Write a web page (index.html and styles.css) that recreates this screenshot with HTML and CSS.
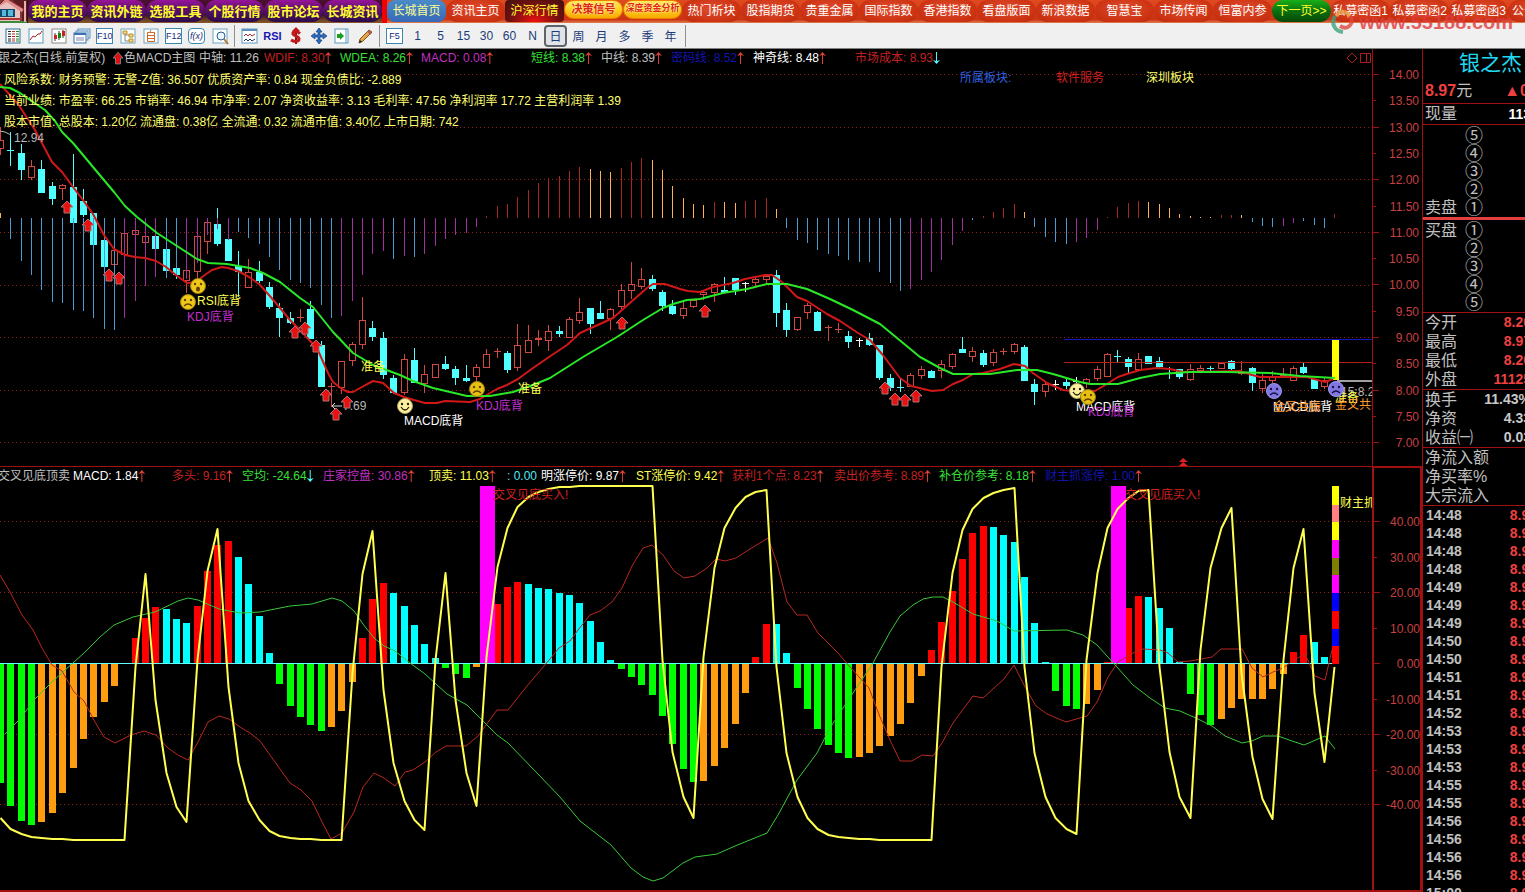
FILE: index.html
```html
<!DOCTYPE html>
<html lang="zh-CN">
<head>
<meta charset="utf-8">
<title>银之杰 日线</title>
<link rel="stylesheet" href="styles.css">
</head>
<body>
<nav class="nav">
  <a class="home" href="#" aria-label="主页">
    <svg width="27" height="23" viewBox="0 0 27 23">
      <rect width="27" height="23" fill="#7d3a36"/>
      <path d="M0 0H27V23H22V8L12 0Z" fill="#5d1c22"/>
      <path d="M-6 10L6-2L24 9L22 13L7 3L-4 13Z" fill="#e08a8a" stroke="#7a1d24"/>
      <path d="M0 6L7 2L20 11V21H0Z" fill="#e9c3bf"/>
      <rect x="0" y="9" width="15" height="8" fill="#16486b"/>
      <path d="M2 10H6V16H2ZM8 10H13V16H8Z" fill="#55b9dc"/>
      <path d="M0 19H22" stroke="#a33" stroke-width="2"/><path d="M0 22H27" stroke="#3f8a3a" stroke-width="2"/>
      <path d="M25 1V22" stroke="#e7b0a8" stroke-width="2"/>
    </svg>
  </a>
  <div class="group dark">
    <a class="pill purple" href="#">我的主页</a><a class="pill purple" href="#">资讯外链</a><a class="pill purple" href="#">选股工具</a><a class="pill purple" href="#">个股行情</a><a class="pill purple" href="#">股市论坛</a><a class="pill purple" href="#">长城资讯</a>
  </div>
  <div class="group">
    <a class="pill blue" href="#">长城首页</a><a class="pill" href="#">资讯主页</a><a class="pill glow" href="#">沪深行情</a><a class="pill gold" href="#">决策信号</a><a class="pill gold" href="#">深度资金分析</a><a class="pill" href="#">热门析块</a><a class="pill" href="#">股指期货</a><a class="pill" href="#">贵重金属</a><a class="pill" href="#">国际指数</a><a class="pill" href="#">香港指数</a><a class="pill" href="#">看盘版面</a><a class="pill" href="#">新浪数据</a><a class="pill" href="#">智慧宝</a><a class="pill" href="#">市场传闻</a><a class="pill" href="#">恒富内参</a><a class="pill green" href="#">下一页&gt;&gt;</a><a class="pill" href="#">私募密函1</a><a class="pill" href="#">私募密函2</a><a class="pill" href="#">私募密函3</a><a class="pill start" href="#">公告</a>
  </div>
</nav>
<div class="watermark">
  <svg width="25" height="24" viewBox="0 0 25 24" fill="none" stroke-width="4">
    <path d="M12 22C3 21 0 13 4 6" stroke="#3fa37c"/>
    <path d="M5 6C10-1 19 2 18 8" stroke="#e8a14a"/>
    <path d="M19 6C24 13 17 21 9 16" stroke="#e0463f"/>
  </svg>
  <span>www.55188.com</span>
</div>
<div class="toolbar">
  <button aria-label="报价"><svg viewBox="0 0 18 18"><rect x="2" y="2" width="14" height="14" fill="#fff" stroke="#2f6f9a"/><path d="M4 4.500H7M4 7H7M4 9.500H7M4 12H7M4 14H7" stroke="#222"/><path d="M8 4.500H11M8 7H11M8 9.500H11M8 12H11M8 14H11" stroke="#c22"/><path d="M12 4.500H15M12 7H15M12 9.500H15M12 12H15M12 14H15" stroke="#181"/></svg></button>
  <button aria-label="分时"><svg viewBox="0 0 18 18"><rect x="2" y="2" width="14" height="14" fill="#fff" stroke="#5a9ac0"/><path d="M3 13L6 9L8 10L11 7L13 7L15 4" stroke="#a22" fill="none"/></svg></button>
  <button aria-label="K线"><svg viewBox="0 0 18 18"><rect x="2" y="2" width="14" height="14" fill="#fff" stroke="#888"/><path d="M5 6V14M9 4V13M13 3V11" stroke="#333"/><rect x="4" y="8" width="3" height="4" fill="#c22"/><rect x="8" y="6" width="3" height="5" fill="#181"/><rect x="12" y="4" width="3" height="5" fill="#c22"/></svg></button>
  <button aria-label="窗口"><svg viewBox="0 0 18 18"><rect x="5" y="2" width="12" height="9" fill="#e8f2fb" stroke="#5a8fc0"/><rect x="3" y="4" width="12" height="9" fill="#e8f2fb" stroke="#5a8fc0"/><rect x="1" y="6" width="12" height="10" fill="#fff" stroke="#3a74b0"/><path d="M1 7H13" stroke="#3a74b0" stroke-width="2"/><path d="M3 11H11M3 13H11" stroke="#88a"/></svg></button>
  <button class="fkey"><span>F10</span></button>
  <button aria-label="树形"><svg viewBox="0 0 18 18"><rect x="2" y="2" width="14" height="14" fill="#fff" stroke="#6aa6c4"/><path d="M6 5V14H10M6 8H10" stroke="#888" fill="none"/><path d="M4 4H8V7H4ZM10 7H14V10H10ZM10 12H14V15H10Z" fill="#f4d77a" stroke="#b8902c"/></svg></button>
  <button aria-label="自选"><svg viewBox="0 0 18 18"><rect x="2" y="2" width="14" height="14" fill="#fff" stroke="#6aa6c4"/><path d="M5.500 5.500H12.500V14.500H5.500ZM5.500 8.500H12.500M5.500 11.500H12.500M8 5L9 3" stroke="#cf6a22" fill="none"/></svg></button>
  <button class="fkey"><span>F12</span></button>
  <button class="fx"><span>f(x)</span></button>
  <button aria-label="查找"><svg viewBox="0 0 18 18"><rect x="2" y="2" width="14" height="14" fill="#fff" stroke="#6aa6c4"/><circle cx="10" cy="9" r="4" fill="#eaf6ff" stroke="#2a5a90"/><path d="M13 12L17 17" stroke="#b07a2a" stroke-width="2"/></svg></button>
  <i class="sep"></i>
  <button aria-label="多图"><svg viewBox="0 0 18 18"><rect x="1" y="2" width="15" height="14" fill="#fff" stroke="#5a9ac0"/><path d="M1 3H16" stroke="#5a8fc0" stroke-width="2"/><path d="M3 9L5 7L7 9L9 7L11 9L14 7" stroke="#a33" fill="none"/><path d="M3 14L5 12L7 14L9 12L11 14L14 12" stroke="#236" fill="none"/></svg></button>
  <button class="rsi">RSI</button>
  <button aria-label="资金"><svg viewBox="0 0 18 18"><path d="M9 1V17" stroke="#7a1515" stroke-width="2"/><path d="M13 6.500C10 4 5 4 6 7C7 9 12 9 12 12C12 15 7 15 4 13" stroke="#c21a1a" stroke-width="3" fill="none"/><path d="M5 4L9 0L13 4Z" fill="#c21a1a"/></svg></button>
  <button aria-label="移动"><svg viewBox="0 0 18 18"><path d="M9 1L12 5H10V8H13V6L17 9L13 12V10H10V13H12L9 17L6 13H8V10H5V12L1 9L5 6V8H8V5H6Z" fill="#2b6cc0" stroke="#123f80" stroke-width=".7"/></svg></button>
  <button aria-label="展开"><svg viewBox="0 0 18 18"><rect x="2" y="2" width="13" height="14" fill="#fff" stroke="#5a9ac0"/><path d="M13 2V16" stroke="#5a9ac0"/><path d="M4 7H7V5L11 9L7 13V11H4Z" fill="#19a019"/></svg></button>
  <button aria-label="画线"><svg viewBox="0 0 18 18"><path d="M3 16L4 12L13 3L16 5L7 14Z" fill="#e6a548" stroke="#7d5520"/><path d="M12 4L15 7" stroke="#a55" stroke-width="2"/><path d="M3 16L4 13L6 15Z" fill="#222"/></svg></button>
  <i class="sep"></i>
  <button class="fkey"><span>F5</span></button>
  <button>1</button><button>5</button><button>15</button><button>30</button><button>60</button><button>N</button><button class="pressed">日</button><button>周</button><button>月</button><button>多</button><button>季</button><button>年</button>
  <i class="sep"></i>
</div>
<main class="work">
  <div class="panels">
    <section class="panel main-panel">
      <div class="plot">
        <div class="legend legend-a">
          <span class="gray first">银之杰(日线.前复权)</span>
          <svg width="10" height="13" viewBox="-6 -7 12 15"><path d="M0-7L6 0H3V7H-3V0H-6Z" fill="#e01010" stroke="#888"/></svg>
          <span class="gray">色MACD主图</span>
          <span class="gray">中轴: 11.26</span>
          <span class="red up">WDIF: 8.30</span>
          <span class="green up">WDEA: 8.26</span>
          <span class="purple-text up">MACD: 0.08</span>
          <span class="green up">短线: 8.38</span>
          <span class="gray up">中线: 8.39</span>
          <span class="navy up">密码线: 8.52</span>
          <span class="white up">神奇线: 8.48</span>
          <span class="red down">市场成本: 8.93</span>
          <svg class="tools" width="26" height="12" viewBox="0 0 26 12" fill="none" stroke="#b02020"><path d="M6 1L11 6L6 11L1 6Z"/><path d="M14.500 1.500H24.500V10.500H14.500ZM20.500 1.500V10.500"/></svg>
        </div>
        <svg class="canvas" id="price"></svg>
      </div>
      <svg class="axis" id="price-axis"></svg>
    </section>
    <section class="panel sub-panel">
      <div class="plot">
        <div class="legend legend-b">
          <span class="gray first">交叉见底顶卖</span>
          <span class="white up">MACD: 1.84</span>
          <span class="red up">多头: 9.16</span>
          <span class="green down">空均: -24.64</span>
          <span class="purple-text up">庄家控盘: 30.86</span>
          <span class="yellow up">顶卖: 11.03</span>
          <span class="aqua">: 0.00</span>
          <span class="white up">明涨停价: 9.87</span>
          <span class="yellow up">ST涨停价: 9.42</span>
          <span class="red up">获利1个点: 8.23</span>
          <span class="red up">卖出价参考: 8.89</span>
          <span class="green up">补仓价参考: 8.18</span>
          <span class="navy up">财主抓涨停: 1.00</span>
        </div>
        <svg class="canvas" id="osc"></svg>
      </div>
      <svg class="axis boxed" id="osc-axis"></svg>
    </section>
  </div>
  <aside class="side">
    <h1>银之杰</h1>
    <div class="row price"><b>8.97</b><span>元</span><em>▲0.77</em></div>
    <div class="row now"><span>现量</span><b class="white">113</b></div>
    <ul class="book asks"><li>⑤</li><li>④</li><li>③</li><li>②</li><li><span>卖盘</span>①</li></ul>
    <ul class="book bids"><li><span>买盘</span>①</li><li>②</li><li>③</li><li>④</li><li>⑤</li></ul>
    <div class="block">
      <div class="row"><span>今开</span><b>8.20</b></div>
      <div class="row"><span>最高</span><b>8.97</b></div>
      <div class="row"><span>最低</span><b>8.20</b></div>
      <div class="row"><span>外盘</span><b>11125</b></div>
    </div>
    <div class="block pale">
      <div class="row"><span>换手</span><b>11.43%</b></div>
      <div class="row"><span>净资</span><b>4.33</b></div>
      <div class="row"><span>收益㈠</span><b>0.03</b></div>
    </div>
    <div class="block">
      <div class="row"><span>净流入额</span></div>
      <div class="row"><span>净买率%</span></div>
      <div class="row"><span>大宗流入</span></div>
    </div>
    <table class="ticks"><tbody id="ticks"></tbody></table>
  </aside>
</main>
<script src="charts.js"></script>
</body>
</html>
```

FILE: styles.css
```css
* { box-sizing: border-box; }

body {
  margin: 0;
  height: 100vh;
  display: flex;
  flex-direction: column;
  overflow: hidden;
  position: relative;
  background: #000;
  color: #c0c0c0;
  font-family: "Liberation Sans", "Noto Sans CJK SC", sans-serif;
  font-size: 12px;
}

/* navigation strip */
.nav {
  display: flex;
  flex: none;
  height: 23px;
  overflow: hidden;
  background: #d8401c;
}
.home { display: block; flex: none; width: 28px; height: 23px; background: #30101c; }
.home svg { display: block; }
.group { display: flex; flex: none; background: linear-gradient(#e04a20, #cc3412 85%, #e08050); }
.group.dark {
  border-right: 5px solid #f00000;
  background: linear-gradient(#4c1030, #30101c 60%, #8a5a28);
}
.pill {
  flex: none;
  width: 59px;
  height: 22px;
  line-height: 23px;
  border-radius: 11px;
  text-align: center;
  text-decoration: none;
  white-space: nowrap;
  color: #fff;
  background: radial-gradient(ellipse at 50% 40%, #e04c2c, #cb3212 70%, #b42a10);
}
.pill.purple {
  color: #ffff30;
  font-size: 13px;
  font-weight: bold;
  background: linear-gradient(#98149a, #5a1068 45%, #2c0c48);
}
.pill.blue { border-radius: 8px; color: #ffff90; background: linear-gradient(#4a8cc8, #3868b8); }
.pill.glow { border-radius: 4px; color: #ffff30; background: radial-gradient(ellipse at 50% 100%, #f01010, #701010 60%, #401010); }
.pill.gold {
  height: 19px;
  line-height: 17px;
  overflow: hidden;
  font-size: 11px;
  font-weight: bold;
  color: #e02810;
  border: 1px solid #f08000;
  background: linear-gradient(#ffe860, #ffd020 50%, #f8a800);
  text-shadow: 0 0 2px #fff;
}
.pill.gold + .pill.gold { font-size: 9px; line-height: 15px; }
.pill.green { color: #ffff30; background: linear-gradient(#18b018, #0a7010 50%, #084808); }
.pill.start { padding-left: 4px; text-align: left; }

.watermark {
  position: absolute;
  top: 10px;
  right: 12px;
  display: flex;
  gap: 3px;
  opacity: .8;
  color: #e03c40;
  font-size: 20px;
  font-weight: bold;
  line-height: 24px;
}

/* toolbar */
.toolbar {
  display: flex;
  flex: none;
  align-items: center;
  height: 26px;
  padding-left: 1px;
  background: #f0f0f0;
  border-bottom: 1px solid #808080;
}
.toolbar button {
  flex: none;
  width: 23px;
  height: 22px;
  padding: 0;
  border: 0;
  background: none;
  color: #1c3c78;
  font: 12px "Liberation Sans", "Noto Sans CJK SC", sans-serif;
}
.toolbar svg { display: block; width: 18px; height: 18px; margin: auto; }
.toolbar .sep { flex: none; width: 1px; height: 22px; margin: 0 3px; background: #909090; }
.toolbar .fkey span, .toolbar .fx span {
  display: block;
  width: 17px;
  height: 16px;
  margin: auto;
  border: 1px solid #3a8ab0;
  background: #fff;
  color: #142c80;
  font-size: 9px;
  line-height: 15px;
}
.toolbar .fx span { border-radius: 4px; font-style: italic; }
.toolbar .rsi { color: #1818b0; font-size: 11px; font-weight: bold; }
.toolbar .pressed { border: 2px solid #606468; border-radius: 4px; background: #e0e4e8; }

/* work area */
.work { display: flex; flex: 1; min-height: 0; }
.panels { display: flex; flex: 1; flex-direction: column; min-width: 0; }
.panel { display: flex; border-bottom: 1px solid #a01010; }
.main-panel { flex: none; height: 418px; }
.sub-panel { flex: 1; min-height: 0; border-bottom-width: 2px; }
.plot { display: flex; flex: 1; flex-direction: column; min-width: 0; }
.canvas { display: block; flex: 1; width: 100%; min-height: 0; overflow: hidden; }
.axis { flex: none; width: 50px; height: 100%; border-left: 1px solid #a01010; }
.axis.boxed { border: solid #a01010; border-width: 1px 2px 0; }
svg text { font-size: 12px; }

.legend {
  display: grid;
  flex: none;
  align-items: center;
  height: 18px;
  line-height: 18px;
  white-space: nowrap;
}
.legend > * { max-height: 18px; }
.legend-a { grid-template-columns: 113px 11px 75px 65px 76px 81px 110px 70px 70px 82px 102px 1fr 26px; }
.legend-b { grid-template-columns: 73px 99px 70px 81px 106px 78px 34px 95px 96px 102px 105px 106px 1fr; }
.legend .first { margin-left: -2px; }
.up::after, .down::after {
  content: "";
  display: inline-block;
  width: 7px;
  height: 12px;
  vertical-align: -2px;
  background: #e04038;
  clip-path: polygon(50% 0, 100% 4px, 4px 3px, 4px 100%, 3px 100%, 3px 3px, 0 4px);
}
.down::after {
  background: #50ffff;
  clip-path: polygon(50% 100%, 100% 8px, 4px 9px, 4px 0, 3px 0, 3px 9px, 0 8px);
}
.gray { color: #c0c0c0; }
.white { color: #fff; }
.red { color: #c42020; }
.green { color: #38e038; }
.navy { color: #1414b0; }
.yellow { color: #ffff50; }
.aqua { color: #50e8f0; }
.purple-text { color: #c030c0; }

/* quote column */
.side {
  display: flex;
  flex: none;
  flex-direction: column;
  width: 103px;
  overflow: hidden;
  border-left: 1px solid #a01010;
  font-size: 16px;
}
.side > * { flex: none; width: 108px; }
h1 {
  height: 29px;
  margin: 0;
  padding-left: 36px;
  color: #20d8f0;
  font-size: 21px;
  font-weight: normal;
  line-height: 27px;
  white-space: nowrap;
}
.row { display: flex; justify-content: space-between; height: 19px; padding-left: 2px; line-height: 19px; white-space: nowrap; }
.row b { color: #f04040; font-size: 14px; }
.row .white { color: #fff; }
.pale b { color: #c8c8c8; }
.row.price { justify-content: flex-start; height: 26px; line-height: 25px; border-bottom: 1px solid #a01010; }
.price b { font-size: 16px; }
.price em { margin-left: 32px; color: #f04040; font-style: normal; font-weight: bold; }
.row.now { height: 21px; line-height: 20px; border-bottom: 1px solid #a01010; }
.book { margin: 0; padding: 2px 0 0; list-style: none; }
.book li { display: flex; justify-content: flex-end; height: 18px; padding-right: 48px; font-size: 18px; line-height: 18px; }
.book span { width: 32px; margin-right: 8px; font-size: 16px; }
.asks { height: 95px; border-bottom: 3px solid #e04040; }
.bids { height: 93px; border-bottom: 1px solid #a01010; }
.block { border-bottom: 1px solid #a01010; }
.side .ticks { width: 114px; border-collapse: collapse; font-size: 14px; font-weight: bold; line-height: 18px; }
.ticks td { height: 18px; padding: 0 0 0 3px; }
.ticks td + td { padding: 0; text-align: right; color: #f04040; }
```

FILE: charts.js
```js
const NS = 'http://www.w3.org/2000/svg';
const C = { r: '#a82820', o: '#ffb050', b: '#4a9cd0', m: '#a030a0' };
const B = { g: '#00ff00', o: '#ff9c10', r: '#ff0000', c: '#00ffff' };

const px = i => Math.floor(0.6 + 10.344 * i) + 0.5;

function el(parent, name, attrs, text) {
  const n = document.createElementNS(NS, name);
  for (const k in attrs) n.setAttribute(k, attrs[k]);
  if (text !== undefined) n.textContent = text;
  parent.appendChild(n);
  return n;
}
function layer(id, top) {
  return el(document.getElementById(id), 'g', { transform: `translate(0 ${-top})` });
}
const line = (g, x1, y1, x2, y2, stroke, w = 1) =>
  el(g, 'line', { x1, y1, x2, y2, stroke, 'stroke-width': w, 'shape-rendering': 'crispEdges' });
const rect = (g, x, y, width, height, fill) =>
  el(g, 'rect', { x, y, width, height, fill, 'shape-rendering': 'crispEdges' });
const poly = (g, pts, stroke, w) =>
  el(g, 'polyline', { points: pts, fill: 'none', stroke, 'stroke-width': w, 'stroke-linejoin': 'round' });
const label = (g, x, y, fill, text) => el(g, 'text', { x, y: y + 5, fill }, text);
const dots = (g, y) => line(g, 0, y, '100%', y, '#902018').setAttribute('stroke-dasharray', '1 3');

/* price panel */
const p = layer('price', 67);
[74.5, 127.5, 179.5, 232.5, 285.5, 337.5, 390.5, 442.5].forEach(y => dots(p, y));

const sticks = `o213 b239 b261 b275 b290 b302 b303 b310 b311 b318 b329 b330 m318 m301 m286 m277 b278 b275 m279 m263
m235 m229 m240 b232 b238 b244 b257 b270 b280 b283 b288 b305 b318 m316 m301 m275 m254 m251 b259 m256
b257 m254 m246 m239 m235 m233 m227 r216 r206 r204 r197 r190 r183 r178 r176 r171 r167 o169 o171 o172
r168 r162 r158 o160 o170 o186 o198 o204 o205 r202 o202 o203 r201 r200 r198 o209 b228 b240 b243 b250
b254 b256 b260 b262 b262 b272 b283 b291 m289 m280 m272 m260 m245 m231 b220 r216 r212 r208 r204 o212
b227 b237 b242 b244 m242 m238 m230 r217 r207 r203 r201 o202 o204 o208 o214 o216 o217 o217 r215 r215
o215 b222 b226 b227 m226 m223 b221 b225 b228 r214`.split(/\s+/);

const candles = `r127,140,149,155 c132,150,151,166 c144,153,170,180 r160,166,178,180 c160,169,193,193 c182,186,199,205
r184,185,189,200 c154,187,223,223 c189,201,215,217 c213,213,245,245 c240,240,267,267 r245,250,265,265
r233,233,255,255 r228,230,235,235 r235,236,243,245 c230,236,249,249 c247,249,271,278 c265,268,275,279
r260,270,281,293 r235,236,272,280 r218,222,242,254 c208,224,244,246 c226,239,261,261 c251,266,272,297
r259,272,288,288 c261,272,281,283 c282,287,307,309 c303,308,318,337 c312,318,323,324 r309,317,318,322
c301,309,339,339 c341,345,387,387 r383,386,387,407 r361,361,388,394 r342,344,361,366 r297,320,345,349
c321,328,337,341 c332,338,375,379 c375,378,393,394 r354,359,393,395 c348,360,383,383 r365,374,384,393
r364,364,378,378 c356,364,369,370 c366,369,378,385 c365,378,381,382 r364,367,377,382 r349,354,368,368
r348,351,352,358 c351,353,370,373 r324,345,368,371 r325,340,353,353 r330,338,340,346 r325,331,341,351
c326,331,334,337 r317,319,338,338 r298,312,321,324 c308,308,324,334 c301,313,319,319 r308,309,319,330
r284,290,307,309 r262,284,291,299 r268,279,287,289 c275,279,289,291 c290,292,306,311 c300,306,314,315
r302,308,316,319 r300,300,307,308 r291,292,295,300 r283,284,293,302 c277,290,293,293 c278,278,290,295
w282,283,284,292 r278,279,283,286 r276,276,280,283 c270,275,313,327 c303,310,330,337 r317,317,330,331
r303,305,313,319 c311,312,331,331 r325,327,328,341 r323,329,330,333 c331,336,342,348 w338,340,341,347
c333,338,345,346 c345,345,378,380 c374,378,388,391 c379,387,388,392 r373,375,387,387 r366,369,376,379
c370,371,378,378 r360,364,371,378 r353,354,367,369 c337,349,353,353 r347,351,357,362 c350,353,365,367
r349,352,363,366 r348,351,352,355 r343,344,352,354 c345,347,381,381 c379,384,392,405 r382,384,392,397
w380,384,385,390 c378,382,386,389 w377,381,382,383 r378,379,384,388 r366,369,379,381 r353,354,377,377
c350,356,357,362 c357,359,367,373 r353,359,370,370 c356,356,364,364 c357,361,367,368 c367,373,374,379
c369,369,377,379 r364,369,380,381 r365,368,371,372 c366,368,369,371 r362,363,369,369 c360,361,369,370
r361,373,374,375 c367,368,383,391 r374,380,389,393 r371,377,381,383 r368,375,376,377 r366,368,381,381
c363,367,373,374 c379,379,389,389 r377,380,387,389`.split(/\s+/);

candles.forEach((s, i) => {
  const [hi, top, bot, lo] = s.slice(1).split(',').map(Number);
  const x = px(i);
  if (s[0] === 'r') {
    const col = '#d04840';
    if (hi < top) line(p, x, hi, x, top, col);
    if (lo > bot) line(p, x, bot, x, lo, col);
    if (bot - top < 2) line(p, x - 3.5, top + 0.5, x + 3.5, top + 0.5, col);
    else el(p, 'rect', { x: x - 3, y: top + 0.5, width: 6, height: bot - top - 1, fill: 'none', stroke: col });
  } else {
    const col = s[0] === 'w' ? '#ffffff' : '#50ffff';
    line(p, x, hi, x, lo, col);
    rect(p, x - 3.5, top, 7, Math.max(1, bot - top), col);
  }
});
sticks.forEach((s, i) => line(p, px(i), 218, px(i), +s.slice(1), C[s[0]]));

line(p, 1064, 339.5, '100%', 339.5, '#1818c0');
line(p, 1064, 362.5, '100%', 362.5, '#b02018');
line(p, 1337, 381, '100%', 381, '#a0a0a0', 2);
rect(p, 1332, 340, 7, 40, '#ffff00');

poly(p, `0,84 18,104 35,130 52,162 62,172 73,187 83,200 93,214 104,235 114,249 125,255 135,257 145,258 156,261 166,267 177,276 187,283
197,282 202,277 212,270 222,267 228,268 238,271 249,277 259,284 269,295 280,308 290,320 300,330 311,342 317,348 328,373 333,382
342,389 348,392 353,392 362,387 373,381 383,383 394,393 404,397 414,400 425,403 437,403 445,401 470,402 480,399 497,389 507,385
518,379 533,368 549,357 567,345 580,333 600,324 613,318 631,302 647,288 653,284 665,284 680,289 688,291 700,292 713,287 733,283
745,279 765,275 772,275 782,282 797,297 807,301 827,314 840,321 858,333 870,340 882,354 900,378 911,386 932,391 943,390 953,384
963,380 973,374 983,373 1000,369 1014,364 1025,366 1033,373 1047,383 1063,390 1072,391 1095,391 1107,384 1118,377 1130,373
1140,370 1157,368 1170,369 1183,372 1240,371 1252,375 1260,377 1307,377 1325,382 1333,379`, '#d01818', 2);
poly(p, `0,87 10,88 20,93 30,100 45,110 55,121 62,132 73,143 93,167 114,192 125,206 137,217 157,233 177,246 197,259 208,263 227,264
250,268 263,273 280,282 300,298 313,307 333,332 353,353 373,365 400,375 413,381 433,388 467,396 490,396 513,392 533,385 550,378
583,357 617,337 643,320 663,308 673,304 687,300 700,299 723,293 747,289 767,284 787,284 807,289 830,299 853,310 880,324 897,338
920,357 940,368 953,374 990,374 1017,370 1037,370 1053,374 1080,382 1090,384 1118,384 1140,378 1160,374 1190,372 1227,372
1270,373 1300,376 1335,378`, '#28e828', 2);

label(p, 4, 79, '#ffff70', '风险系数: 财务预警: 无警-Z值: 36.507 优质资产率: 0.84 现金负债比: -2.889');
label(p, 4, 100, '#ffff70', '当前业绩: 市盈率: 66.25 市销率: 46.94 市净率: 2.07 净资收益率: 3.13 毛利率: 47.56 净利润率 17.72 主营利润率 1.39');
label(p, 4, 121, '#ffff70', '股本市值: 总股本: 1.20亿 流通盘: 0.38亿 全流通: 0.32 流通市值: 3.40亿 上市日期: 742');
label(p, 960, 77, '#3060e0', '所属板块:');
label(p, 1056, 77, '#d02020', '软件服务');
label(p, 1146, 77, '#ffff70', '深圳板块');

label(p, 14, 137, '#b8b8b8', '12.94');
poly(p, '0,131 5,132 11,135', '#b8b8b8', 1);
label(p, 343, 405, '#b8b8b8', '7.69');
poly(p, '335,403 332,406 335,409 332,406 342,406', '#d8d8d8', 1);

[[67, 207], [88, 225], [109, 275], [119, 278], [295, 332], [305, 328], [316, 346], [326, 395], [347, 402], [336, 414],
 [622, 323], [705, 311], [885, 388], [895, 399], [905, 400], [916, 396]].forEach(([x, y]) =>
  el(p, 'path', { d: `M${x} ${y - 6}L${x + 6} ${y}H${x + 3}V${y + 6}H${x - 3}V${y}H${x - 6}Z`, fill: '#e81010', stroke: '#b07070', 'stroke-width': 1 }));

function face(x, y, mood, fill, ink, rim) {
  const g = el(p, 'g', { transform: `translate(${x} ${y})` });
  el(g, 'circle', { r: 7.5, fill, stroke: rim });
  el(g, 'circle', { cx: -3, cy: -2, r: 1.2, fill: ink });
  el(g, 'circle', { cx: 3, cy: -2, r: 1.2, fill: ink });
  if (mood === 'gasp') el(g, 'ellipse', { cy: 3, rx: 2, ry: 2.5, fill: ink });
  else el(g, 'path', { d: mood === 'smile' ? 'M-4 1Q0 7 4 1' : 'M-4 4Q0 0 4 4', fill: 'none', stroke: ink, 'stroke-width': 1.3 });
}
face(188, 302, 'sad', '#f0c818', '#604008', '#a08010');
face(198, 286, 'gasp', '#f0c818', '#604008', '#a08010');
face(477, 389, 'sad', '#e8c010', '#604008', '#a08010');
face(405, 406, 'smile', '#fff0a0', '#202000', '#b0a060');

label(p, 197, 300, '#ffff50', 'RSI底背');
label(p, 187, 316, '#c030d0', 'KDJ底背');
label(p, 361, 366, '#ffff50', '准备');
label(p, 404, 420, '#ffffff', 'MACD底背');
label(p, 476, 405, '#c030d0', 'KDJ底背');
label(p, 518, 388, '#ffff50', '准备');
label(p, 1076, 406, '#ffffff', 'MACD底背');
label(p, 1088, 411, '#c030d0', 'KDJ底背');
face(1077, 391, 'smile', '#fff0a0', '#202000', '#b0a060');
face(1088, 397, 'sad', '#e8c010', '#604008', '#a08010');
label(p, 1273, 406, '#ffffff', 'MACD底背');
label(p, 1273, 406, '#ff9830', '金叉共振');
face(1274, 391, 'sad', '#8078e0', '#181048', '#a098f0');
label(p, 1341, 391, '#b8b8b8', '15:8.20');
label(p, 1335, 397, '#ffff50', '准备');
label(p, 1335, 404, '#ff9830', '金叉共振');
face(1336, 389, 'sad', '#8078e0', '#181048', '#a098f0');
el(p, 'path', { d: 'M1183 458L1188 462H1179ZM1183 462L1188 466H1179Z', fill: '#e02020' });

/* oscillator panel */
const o = layer('osc', 485);
[521.5, 592.5, 734.5, 804.5].forEach(y => dots(o, y));

const bars = `g783 g806 g821 g825 o822 o813 o793 o768 o739 o717 o702 o686 - r638 r618 r607 c609 c619 c623 r606
r571 r545 r541 c557 c584 c616 c653 g684 g706 g717 g725 g731 o727 o711 o682 r638 r599 r583 c593 c606
c625 c644 c658 g668 g674 g678 o667 - r604 r587 r582 c584 c588 c589 c593 c595 c603 c621 c642 c660
g669 g677 g685 g695 g716 g744 g769 g782 o781 o766 o748 o724 o693 r657 r624 c624 c653 g688 g709 g729
g745 g753 g758 o757 o753 o746 o736 o724 o703 o676 r650 r622 r591 r559 r533 r526 c527 c535 c542 c577
c623 c662 g691 g706 g709 o704 o690 r662 - r608 r596 c597 c608 c628 c662 g694 g715 g725 o719 o708
o699 o699 o699 o689 o674 r652 r635 c642 c657`.split(/\s+/);
bars.forEach((s, i) => {
  if (s === '-') return;
  const y = +s.slice(1);
  rect(o, px(i) - 3.5, Math.min(y, 663), 7, Math.abs(y - 663), B[s[0]]);
});
rect(o, 480, 486, 15, 177, '#ff00ff');
rect(o, 1111, 486, 15, 177, '#ff00ff');

line(o, 0, 663.5, 1335, 663.5, '#60ffff');

poly(o, `0,575 10,592 22,615 33,630 42,648 52,665 62,671 74,692 84,701 95,722 104,737 115,743 131,735 144,731 156,735 168,748
178,755 188,760 198,742 208,722 219,716 229,719 240,727 250,733 260,741 290,783 301,790 312,801 322,822 331,839 342,833 354,812
363,787 374,773 384,778 395,786 405,772 413,770 425,762 436,752 446,746 466,746 478,736 497,710 508,710 527,686 550,659 559,648
570,641 578,630 590,615 600,611 612,602 622,588 632,566 643,548 652,545 663,555 674,571 684,578 695,576 707,568 716,559 725,561
736,558 750,549 768,538 777,563 787,602 797,615 807,615 818,633 838,653 850,667 869,688 880,717 890,740 900,761 912,761 922,755
933,756 942,743 953,723 973,696 983,698 1004,679 1014,665 1025,687 1036,706 1047,714 1066,722 1087,716 1097,702 1108,677
1118,662 1133,653 1143,649 1160,650 1168,653 1178,662 1190,661 1212,657 1221,649 1242,649 1252,668 1263,677 1273,672 1283,668
1294,660 1305,654 1315,676 1325,680 1332,650`, '#b82820', 1);
poly(o, `5,734 20,719 34,700 52,682 64,671 84,653 100,637 114,625 133,617 155,612 178,601 188,598 198,600 219,609 240,613 260,612
290,606 312,604 332,598 342,601 354,611 363,624 374,638 384,646 395,651 410,663 425,674 447,694 467,705 497,735 508,743 537,773
560,797 580,821 611,845 631,868 643,877 653,881 663,878 683,863 695,857 717,854 735,846 767,833 778,815 790,793 797,780 817,753
830,728 843,708 873,663 890,632 900,616 913,605 923,599 933,597 943,597 953,602 973,614 997,621 1014,631 1067,630 1083,635
1097,645 1117,667 1133,685 1150,698 1165,708 1180,711 1198,719 1212,726 1225,736 1242,743 1252,741 1263,736 1278,736 1292,741
1304,745 1325,736 1335,749`, '#38c838', 1);

const sell = `818 829 834 837 838 839 839 840 840 840 840 840 840 667 574 700 773 807 822 660 571 529 687 763 801 820 831 836 838
839 839 840 840 840 673 574 531 690 763 801 820 830 660 573 700 773 806 657 567 528 507 497 492 489 487 487 486 486 486 486 486
486 486 486 660 752 797 818 657 568 528 508 497 492 490 667 753 797 818 829 835 837 838 839 839 840 840 840 840 840 840 667 573
530 509 498 493 490 488 667 753 797 818 829 834 660 573 528 509 498 491 490 667 752 797 818 650 568 528 508 673 757 799 819 660
568 529 693 762 667`.split(/\s+/);
poly(o, sell.map((y, i) => `${px(i)},${y}`).join(' '), '#ffff50', 2);

const stack = [[486, '#ffff00'], [505, '#ff8080'], [522, '#ffff00'], [540, '#ff00ff'], [558, '#808000'], [575, '#ff00ff'],
  [593, '#0000ff'], [611, '#ff0000'], [629, '#0000ff'], [646, '#ff0000'], [664]];
for (let k = 0; k < 10; k++) rect(o, 1332, stack[k][0], 7, stack[k + 1][0] - stack[k][0], stack[k][1]);

label(o, 493, 494, '#d02020', '交叉见底买入!');
label(o, 1125, 494, '#d02020', '交叉见底买入!');
label(o, 1340, 502, '#ffff50', '财主抓涨停');

/* value axes */
function axis(id, top, rows) {
  const g = layer(id, top);
  rows.forEach(([y, text], k) => {
    line(g, 0, y + 0.5, k % 2 ? 3 : 6, y + 0.5, '#a01010');
    el(g, 'text', { x: 46, y: y + 5, fill: '#c84040', 'text-anchor': 'end' }, text);
  });
}
axis('price-axis', 49, Array.from({ length: 15 }, (_, k) => [Math.round(74 + 26.3 * k), (14 - k / 2).toFixed(2)]));
axis('osc-axis', 468, [521, 557, 592, 628, 663, 699, 734, 770, 804].map((y, k) => [y, (40 - k * 10).toFixed(2)]));

/* trade list */
document.getElementById('ticks').innerHTML =
  '14:48 14:48 14:48 14:48 14:49 14:49 14:49 14:50 14:50 14:51 14:51 14:52 14:53 14:53 14:53 14:55 14:55 14:56 14:56 14:56 14:56 15:00'
    .split(' ').map(t => `<tr><td>${t}</td><td>8.97</td></tr>`).join('');
```
